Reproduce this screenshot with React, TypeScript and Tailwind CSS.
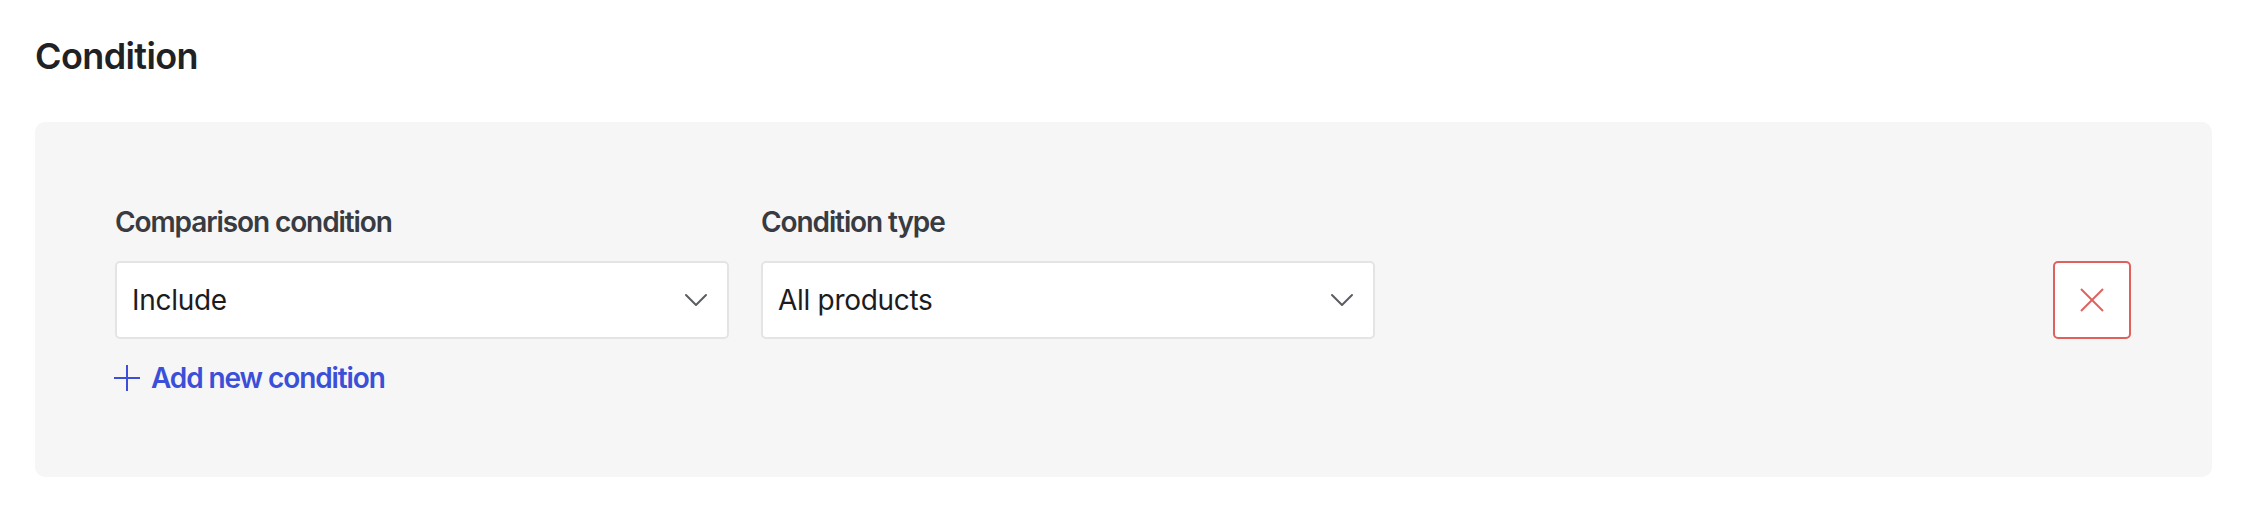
import React from "react";

function Chevron() {
  return (
    <svg width="24" height="16" viewBox="0 0 24 16" fill="none" className="shrink-0">
      <polyline points="2,3 12,13 22,3" stroke="#5a5d63" strokeWidth="2" strokeLinecap="round" strokeLinejoin="round" />
    </svg>
  );
}

function SelectField({ label, value }: { label: string; value: string }) {
  return (
    <div className="flex w-[614px] flex-col">
      <div className="text-[28px] font-semibold leading-[36px] tracking-[-1.1px] text-[#383b41]">{label}</div>
      <div className="mt-[21px] flex h-[78px] items-center justify-between rounded-[5px] border-2 border-[#e4e4e4] bg-white pl-[15px] pr-[19px]">
        <span className="text-[28px] leading-[36px] tracking-[-0.3px] text-[#1c1c1e]">{value}</span>
        <Chevron />
      </div>
    </div>
  );
}

export default function App() {
  return (
    <div className="min-h-[516px] bg-white px-[34px] pl-[35px] pt-[34px]" style={{ fontFamily: "Inter, 'Noto Sans', sans-serif" }}>
      <h1 className="text-[36px] font-semibold leading-[44px] tracking-[-0.6px] text-[#1f2124]">Condition</h1>
      <div className="mt-[44px] rounded-[10px] bg-[#f6f6f6] pb-[81px] pl-[80px] pr-[81px] pt-[82px]">
        <div className="flex items-end justify-between">
          <div className="flex gap-[32px]">
            <SelectField label="Comparison condition" value="Include" />
            <SelectField label="Condition type" value="All products" />
          </div>
          <button className="flex h-[78px] w-[78px] items-center justify-center rounded-[5px] border-2 border-[#e0605e] bg-white">
            <svg width="26" height="26" viewBox="0 0 26 26" fill="none">
              <line x1="2" y1="2" x2="24" y2="24" stroke="#e0605e" strokeWidth="2" />
              <line x1="24" y1="2" x2="2" y2="24" stroke="#e0605e" strokeWidth="2" />
            </svg>
          </button>
        </div>
        <div className="mt-[21px] flex items-center gap-[11px] text-[#3b4fd8]">
          <svg width="26" height="26" viewBox="0 0 26 26" fill="none" className="-ml-px">
            <line x1="13" y1="0" x2="13" y2="26" stroke="#3b4fd8" strokeWidth="2" />
            <line x1="0" y1="13" x2="26" y2="13" stroke="#3b4fd8" strokeWidth="2" />
          </svg>
          <span className="text-[28px] font-semibold leading-[36px] tracking-[-1.1px]">Add new condition</span>
        </div>
      </div>
    </div>
  );
}
